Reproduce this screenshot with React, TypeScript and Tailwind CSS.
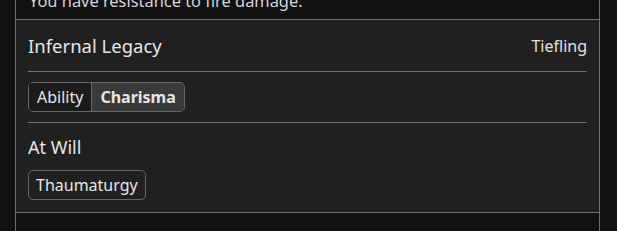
import React from "react";

const font = { fontFamily: '"Noto Sans", "Open Sans", sans-serif' };

function Tag({ children }: { children: React.ReactNode }) {
  return (
    <span className="inline-flex h-[30px] items-center rounded-[5px] border border-[#666] px-[7px] text-[16px] text-[#e6e6e6]">
      {children}
    </span>
  );
}

export default function App() {
  return (
    <div className="min-h-screen bg-[#111111]" style={font}>
      <div className="ml-[15px] flex min-h-[231px] w-[585px] flex-col border-x border-[#6f6f6f]">
        <div className="h-[19px] overflow-hidden">
          <p className="-mt-[9px] pl-[13px] text-[16.4px] leading-[20px] text-[#d6d6d6]">
            You have resistance to fire damage.
          </p>
        </div>
        <section className="border-y border-[#6f6f6f] bg-[#202020] px-[12px] pt-[14px] pb-[12px]">
          <div className="flex items-center justify-between border-b border-[#6f6f6f] pb-[13px]">
            <h3 className="text-[18.5px] leading-[24px] text-[#e6e6e6]">Infernal Legacy</h3>
            <span className="text-[16px] leading-[24px] text-[#e0e0e0]">Tiefling</span>
          </div>
          <div className="border-b border-[#6f6f6f] py-[10px]">
            <div className="inline-flex h-[30px] overflow-hidden rounded-[5px] border border-[#666] text-[16px]">
              <span className="flex items-center bg-[#1b1b1b] px-[8px] text-[#e6e6e6]">Ability</span>
              <span className="flex items-center border-l border-[#666] bg-[#3a3a3a] px-[8px] font-bold text-[#e6e6e6]">
                Charisma
              </span>
            </div>
          </div>
          <h4 className="mt-[12px] text-[18px] leading-[24px] text-[#e6e6e6]">At Will</h4>
          <div className="mt-[11px]">
            <Tag>Thaumaturgy</Tag>
          </div>
        </section>
      </div>
    </div>
  );
}
